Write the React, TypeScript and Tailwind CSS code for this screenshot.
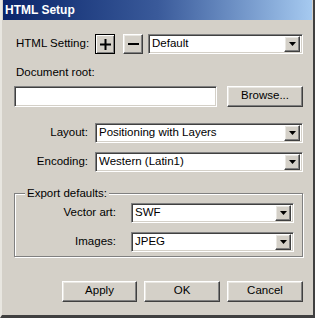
import React from "react";

const raised =
  "border border-t-white border-l-white border-r-[#404040] border-b-[#404040] shadow-[inset_-1px_-1px_0_#808080,inset_1px_1px_0_#e9e7e2]";
const sunken =
  "border border-t-[#808080] border-l-[#808080] border-r-white border-b-white shadow-[inset_1px_1px_0_#404040,inset_-1px_-1px_0_#d4d0c8]";

function Select({ value, className = "" }: { value: string; className?: string }) {
  return (
    <div className={`${sunken} bg-white h-[20px] flex items-center pl-[3px] pr-[2px] ${className}`}>
      <span className="flex-1 leading-none truncate">{value}</span>
      <div className={`${raised} bg-[#d4d0c8] w-[16px] h-[16px] flex items-center justify-center`}>
        <svg width="7" height="4" viewBox="0 0 7 4">
          <path d="M0 0h7L3.5 4z" fill="#000" />
        </svg>
      </div>
    </div>
  );
}

function Button({ label, className = "" }: { label: string; className?: string }) {
  return (
    <button className={`${raised} bg-[#d4d0c8] h-[21px] flex items-center justify-center leading-none ${className}`}>
      {label}
    </button>
  );
}

export default function App() {
  return (
    <div
      className="w-[315px] h-[318px] bg-[#d4d0c8] text-black text-[11.5px] overflow-hidden flex flex-col border-l-2 border-l-[#e8e6e0] border-r-2 border-r-[#404040] border-b-[3px] border-b-[#404040] px-[1px]"
      style={{ fontFamily: '"Liberation Sans", Arial, sans-serif' }}
    >
      {/* title bar */}
      <div className="h-[20px] bg-gradient-to-r from-[#0a246a] via-[#3a5a9a] to-[#a6caf0] flex items-center pl-[2px]">
        <span className="text-white font-bold text-[12px] leading-none">HTML Setup</span>
      </div>

      <div className="flex flex-col pl-[11px] pr-[9px]">
        {/* HTML Setting row */}
        <div className="flex items-center mt-[14px]">
          <span className="w-[81px] pl-[2px]">HTML Setting:</span>
          <button className="w-[20px] h-[20px] border border-black bg-[#d4d0c8] shadow-[inset_1px_1px_0_#fff,inset_-1px_-1px_0_#808080] flex items-center justify-center">
            <svg width="11" height="11" viewBox="0 0 11 11">
              <path d="M4.5 0h2v4.5H11v2H6.5V11h-2V6.5H0v-2h4.5z" fill="#000" />
            </svg>
          </button>
          <button className={`${raised} ml-[8px] w-[20px] h-[20px] bg-[#d4d0c8] flex items-center justify-center`}>
            <svg width="11" height="2" viewBox="0 0 11 2">
              <rect width="11" height="2" fill="#000" />
            </svg>
          </button>
          <Select value="Default" className="ml-[5px] flex-1" />
        </div>

        {/* Document root */}
        <span className="mt-[13px] pl-[2px] leading-none">Document root:</span>
        <div className="flex items-center mt-[7px]">
          <div className={`${sunken} bg-white h-[21px] w-[203px]`} />
          <Button label="Browse..." className="ml-[10px] w-[76px]" />
        </div>

        {/* Layout / Encoding */}
        <div className="flex items-center mt-[16px]">
          <span className="w-[74px] text-right">Layout:</span>
          <Select value="Positioning with Layers" className="ml-[7px] flex-1" />
        </div>
        <div className="flex items-center mt-[9px]">
          <span className="w-[74px] text-right">Encoding:</span>
          <Select value="Western (Latin1)" className="ml-[7px] flex-1" />
        </div>

        {/* Export defaults group */}
        <fieldset className="mt-[16px] border border-[#808080] shadow-[inset_1px_1px_0_#fff,1px_1px_0_#fff] pl-[4px] pr-[8px] h-[69px]">
          <legend className="ml-[6px] px-[2px] bg-[#d4d0c8] relative leading-none">Export defaults:</legend>
          <div className="flex items-center mt-[4px]">
            <span className="w-[97px] text-right">Vector art:</span>
            <Select value="SWF" className="ml-[15px] flex-1" />
          </div>
          <div className="flex items-center mt-[9px]">
            <span className="w-[97px] text-right">Images:</span>
            <Select value="JPEG" className="ml-[15px] flex-1" />
          </div>
        </fieldset>

        {/* buttons */}
        <div className="flex justify-end mt-[24px] gap-[7px]">
          <Button label="Apply" className="w-[75px]" />
          <Button label="OK" className="w-[76px]" />
          <Button label="Cancel" className="w-[76px]" />
        </div>
      </div>
    </div>
  );
}
